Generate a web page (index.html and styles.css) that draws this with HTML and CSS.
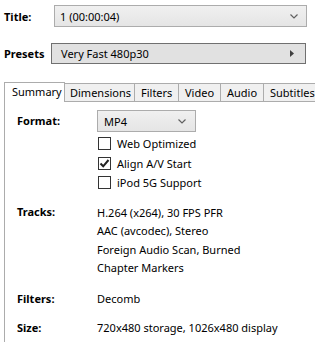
FILE: index.html
```html
<!DOCTYPE html>
<html>
<head>
<meta charset="utf-8">
<link rel="stylesheet" href="styles.css">
</head>
<body>
<div class="top-row title-row">
  <span class="top-label">Title:</span>
  <div class="combo title-combo">
    <span>1 (00:00:04)</span>
    <svg class="chev" width="8" height="5" viewBox="0 0 8 5"><path d="M0.5 0.5 L4 4 L7.5 0.5" fill="none" stroke="#606060" stroke-width="1.2"/></svg>
  </div>
</div>
<div class="top-row presets-row">
  <span class="top-label">Presets</span>
  <div class="preset-btn">
    <span>Very Fast 480p30</span>
    <svg class="arrow" width="4" height="7" viewBox="0 0 4 7"><path d="M0 0 L4 3.5 L0 7 Z" fill="#404040"/></svg>
  </div>
</div>
<div class="tabs">
  <div class="tab active">Summary</div>
  <div class="tab">Dimensions</div>
  <div class="tab">Filters</div>
  <div class="tab">Video</div>
  <div class="tab">Audio</div>
  <div class="tab">Subtitles</div>
</div>
<div class="panel">
  <div class="row format-row">
    <span class="label">Format:</span>
    <div class="value">
      <div class="combo format-combo">
        <span>MP4</span>
        <svg class="chev" width="8" height="5" viewBox="0 0 8 5"><path d="M0.5 0.5 L4 4 L7.5 0.5" fill="none" stroke="#606060" stroke-width="1.2"/></svg>
      </div>
      <div class="checks">
        <div class="check"><span class="box"></span>Web Optimized</div>
        <div class="check"><span class="box"><svg width="11" height="11" viewBox="0 0 11 11"><path d="M1.5 5.5 L4.2 8.3 L9.5 2" fill="none" stroke="#222" stroke-width="2"/></svg></span>Align A/V Start</div>
        <div class="check"><span class="box"></span>iPod 5G Support</div>
      </div>
    </div>
  </div>
  <div class="row tracks-row">
    <span class="label">Tracks:</span>
    <div class="value lines">
      <div>H.264 (x264), 30 FPS PFR</div>
      <div>AAC (avcodec), Stereo</div>
      <div>Foreign Audio Scan, Burned</div>
      <div>Chapter Markers</div>
    </div>
  </div>
  <div class="row filters-row">
    <span class="label">Filters:</span>
    <div class="value">Decomb</div>
  </div>
  <div class="row size-row">
    <span class="label">Size:</span>
    <div class="value">720x480 storage, 1026x480 display</div>
  </div>
</div>
</body>
</html>
```

FILE: styles.css
```css
html, body {
  margin: 0;
  padding: 0;
  background: #ffffff;
  overflow: hidden;
}
body {
  font-family: "Noto Sans", "Open Sans", sans-serif;
  font-size: 11px;
  color: #000;
  width: 315px;
  height: 343px;
}
.top-row {
  display: flex;
  align-items: center;
}
.top-label {
  font-weight: bold;
  padding-left: 4px;
}
.title-row {
  padding-top: 5px;
  height: 22px;
}
.title-row .top-label {
  width: 50px;
}
.combo {
  box-sizing: border-box;
  display: flex;
  align-items: center;
  justify-content: space-between;
  border: 1px solid #acacac;
  background: linear-gradient(#f0f0f0, #e5e5e5);
  padding: 0 8px 0 5px;
}
.title-combo {
  width: 253px;
  height: 22px;
}
.presets-row {
  margin-top: 16px;
  height: 21px;
}
.presets-row .top-label {
  width: 47px;
}
.preset-btn {
  box-sizing: border-box;
  width: 255px;
  height: 21px;
  border: 1px solid #707070;
  background: #e1e1e1;
  display: flex;
  align-items: center;
  justify-content: space-between;
  padding: 0 11px 0 9px;
}
.tabs {
  display: flex;
  margin-top: 18px;
  padding-left: 4px;
  align-items: flex-end;
  height: 19px;
  white-space: nowrap;
}
.tab {
  box-sizing: border-box;
  flex: none;
  height: 18px;
  border: 1px solid #acacac;
  border-bottom: none;
  border-left: none;
  background: #f0f0f0;
  padding: 0 0 0 6px;
  line-height: 17px;
  overflow: hidden;
}
.tab.active {
  height: 20px;
  margin-bottom: -1px;
  border-left: 1px solid #acacac;
  background: #fff;
  position: relative;
  z-index: 1;
  width: 61px;
  padding: 0 0 0 7px;
  line-height: 18px;
}
.tab:nth-child(2) { width: 70px; padding-left: 5px; }
.tab:nth-child(3) { width: 44px; }
.tab:nth-child(4) { width: 42px; }
.tab:nth-child(5) { width: 43px; }
.tab:nth-child(6) { width: 60px; border-right: none; }
.panel {
  margin-left: 4px;
  border-left: 1px solid #acacac;
  border-top: 1px solid #acacac;
  height: 232px;
  padding-top: 8px;
}
.row {
  display: flex;
}
.label {
  font-weight: bold;
  width: 80px;
  padding-left: 12px;
  flex: none;
}
.format-row .label {
  line-height: 22px;
}
.format-combo {
  width: 99px;
  height: 22px;
  padding: 0 9px 0 6px;
}
.checks {
  margin-top: 2px;
}
.check {
  display: flex;
  align-items: center;
  height: 19.5px;
}
.box {
  box-sizing: border-box;
  width: 13px;
  height: 13px;
  border: 1px solid #333;
  background: #fff;
  margin: 0 6px 0 1px;
  display: flex;
  align-items: center;
  justify-content: center;
}
.tracks-row {
  margin-top: 11px;
}
.lines div {
  line-height: 18.5px;
}
.filters-row, .size-row {
  line-height: 19px;
}
.filters-row {
  margin-top: 11px;
}
.size-row {
  margin-top: 10px;
}
```
